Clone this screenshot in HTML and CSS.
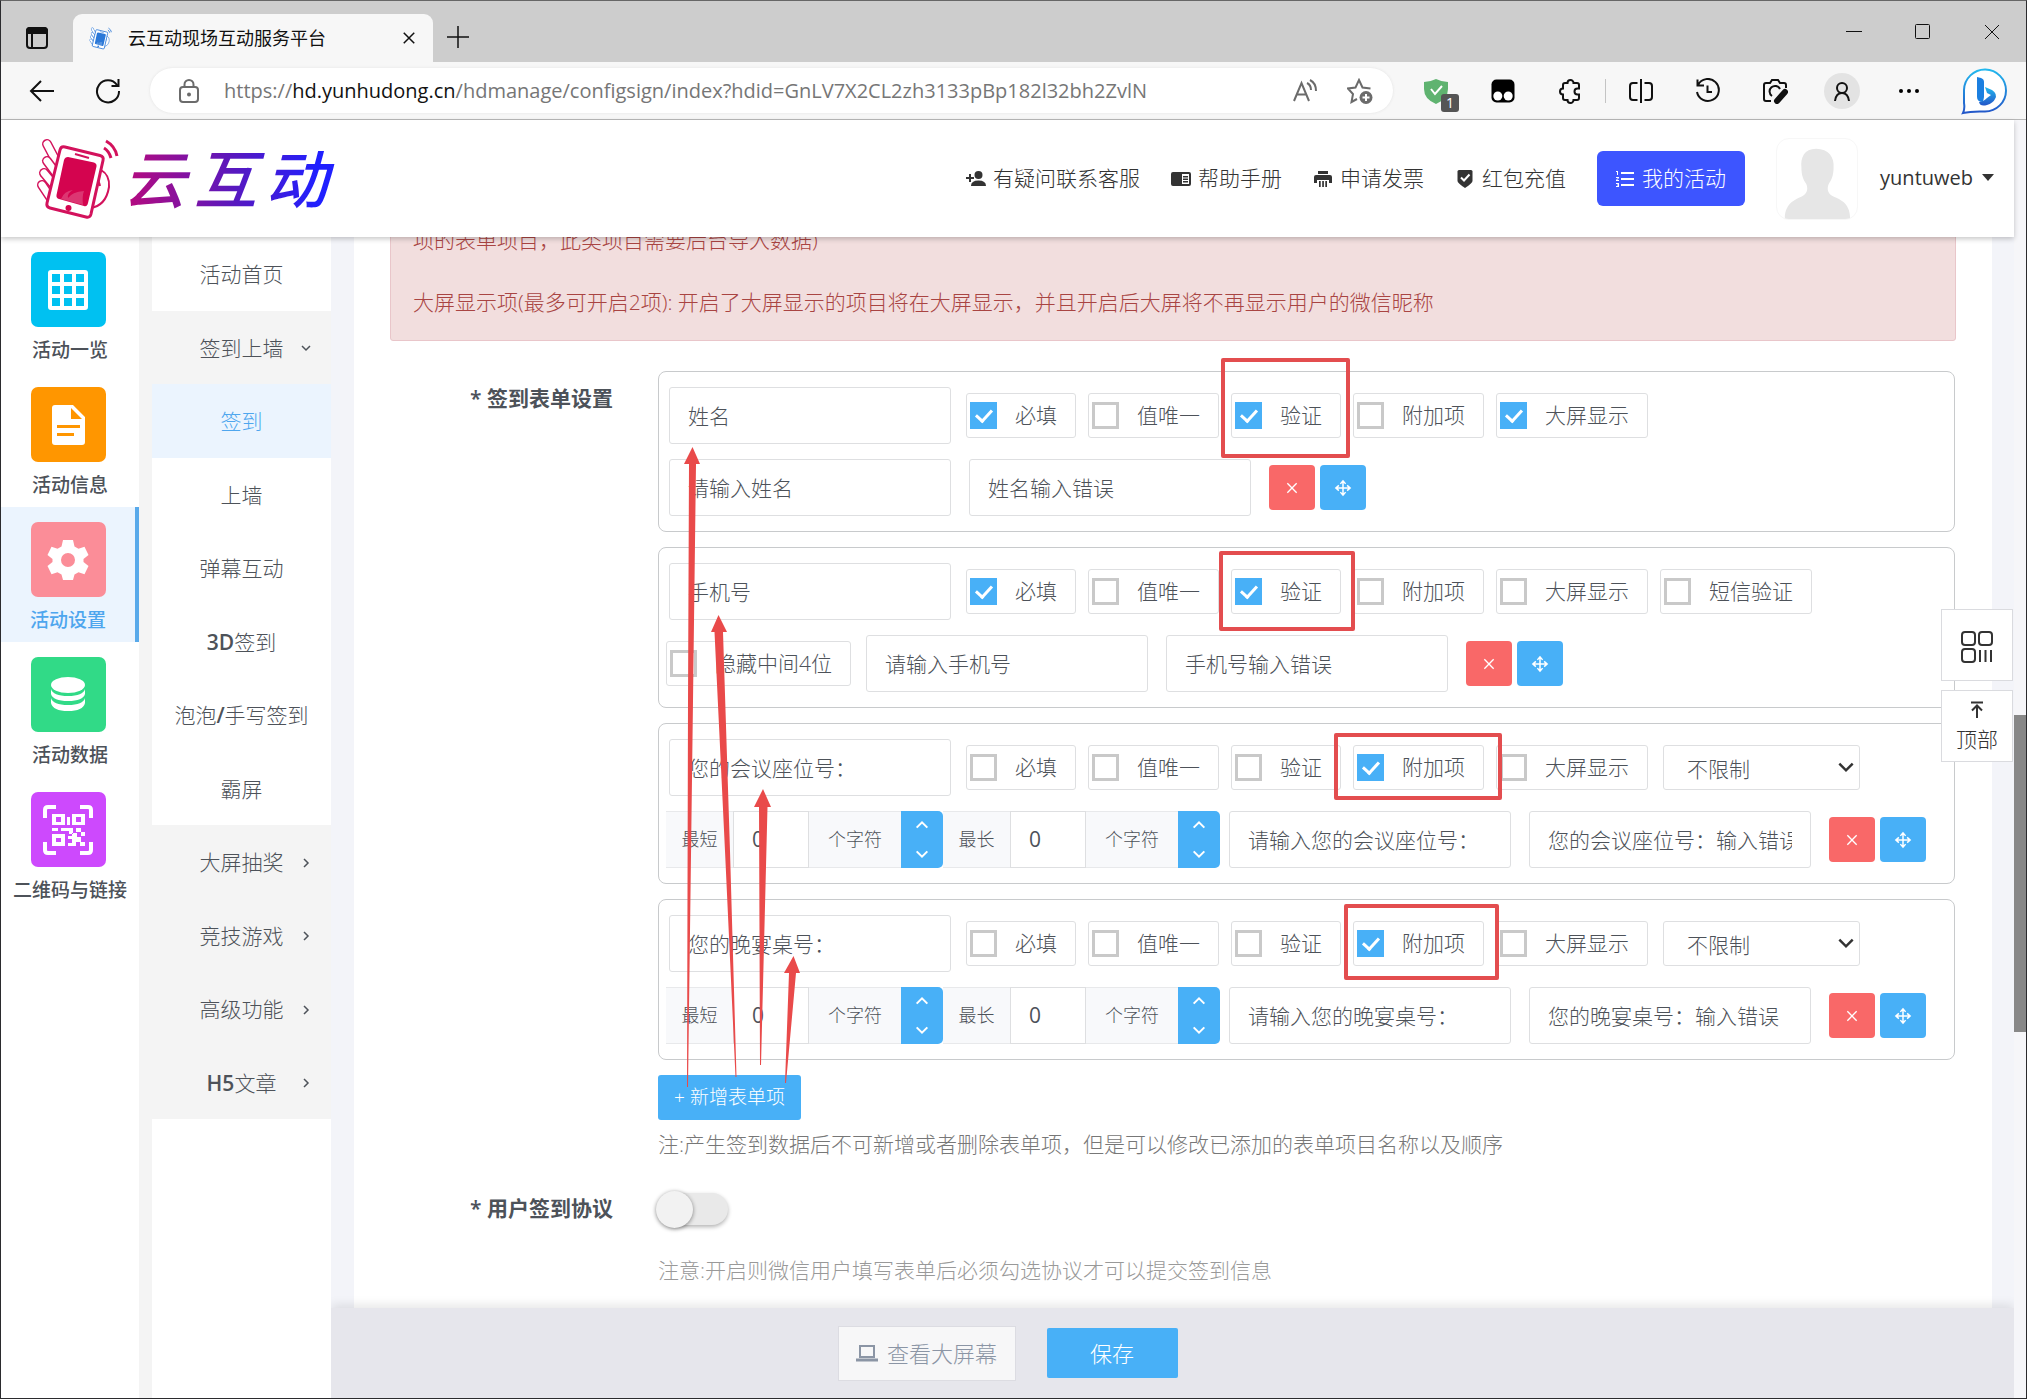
FILE: index.html
```html
<!DOCTYPE html>
<html lang="zh-CN">
<head>
<meta charset="utf-8">
<meta name="viewport" content="width=device-width, initial-scale=1">
<title>云互动现场互动服务平台</title>
<link rel="stylesheet" href="styles.css">
</head>
<body>
<svg class="sprite" aria-hidden="true">
  <symbol id="i-close" viewBox="0 0 24 24"><path d="M5 5 19 19M19 5 5 19"/></symbol>
  <symbol id="i-move" viewBox="0 0 24 24"><path d="M12 3v18M3 12h18M8.500 6.500 12 2.500l3.500 4M8.500 17.500l3.500 4 3.500-4M6.500 8.500l-4 3.500 4 3.500M17.500 8.500l4 3.500-4 3.500"/></symbol>
  <symbol id="i-up" viewBox="0 0 24 24"><path d="M4 16l8-8 8 8"/></symbol>
  <symbol id="i-down" viewBox="0 0 24 24"><path d="M4 8l8 8 8-8"/></symbol>
  <symbol id="i-right" viewBox="0 0 24 24"><path d="M8 4l8 8-8 8"/></symbol>
  <symbol id="i-hand" viewBox="0 0 84 84">
    <g stroke-linecap="round">
      <path d="M12 7 22 26" class="finger"/><path d="M12 7 22 26" class="finger-in"/>
      <path d="M12 24 21 36" class="finger"/><path d="M12 24 21 36" class="finger-in"/>
      <path d="M9 36 19 48" class="finger"/><path d="M9 36 19 48" class="finger-in"/>
      <path d="M7 48 15 60" class="finger"/><path d="M7 48 15 60" class="finger-in"/>
    </g>
    <path d="M66 33q9 5 8 17-3 19-19 21M62 43q2 1 3 6" class="thin"/>
    <path d="M30 10 65 18.500q4 1 3 5L56 77q-1 4-5 3L15 71q-4-1-3-5L25 13q1-4 5-3z" class="shell"/>
    <path d="M33 20 59 25.500q3 1 2.500 4L53 66q-1 4-4 3L24 62q-3-1-2.500-4L29 23q1-3 4-3z" class="screen"/>
    <path d="M26 62q3-8 12-9-6 3-5 8 4-6 16-7-2 5-1 14z" fill="#fff" fill-opacity=".2" stroke="none"/>
    <path d="M40 17l14 4" class="detail"/>
    <circle cx="33.500" cy="71" r="3" class="screen"/>
    <path d="M69 11q5 3 7 10M71 4q9 5 11 15" class="waves"/>
  </symbol>
</svg>

<div class="tabstrip">
  <button class="tab-menu" aria-label="标签页操作"><svg class="ic" width="24" height="24" viewBox="0 0 24 24"><rect x="2" y="2" width="20" height="20" rx="3"/><path d="M2 7V5q0-3 3-3h14q3 0 3 3v2z" fill="currentColor"/><path d="M7 7v15"/></svg></button>
  <div class="tab">
    <svg class="favicon" width="23" height="23"><use href="#i-hand"/></svg>
    <span class="tab-title">云互动现场互动服务平台</span>
    <button class="tab-close" aria-label="关闭标签页"><svg class="ic" width="18" height="18"><use href="#i-close"/></svg></button>
  </div>
  <button class="tab-new" aria-label="新建标签页"><svg class="ic" width="24" height="24" viewBox="0 0 24 24"><path d="M12 1v22M1 12h22"/></svg></button>
  <div class="win-controls">
    <button aria-label="最小化"><svg class="ic hair" width="16" height="16" viewBox="0 0 16 16"><path d="M0 7.500h16"/></svg></button>
    <button aria-label="最大化"><svg class="ic hair" width="16" height="16" viewBox="0 0 16 16"><rect x="0.500" y="0.500" width="14" height="14" rx="1"/></svg></button>
    <button aria-label="关闭"><svg class="ic hair" width="16" height="16" viewBox="0 0 16 16"><path d="M1 1l14 14M15 1 1 15"/></svg></button>
  </div>
</div>

<div class="toolbar">
  <button class="slot" aria-label="后退"><svg class="ic" width="26" height="24" viewBox="0 0 26 24"><path d="M25 12H2M12 2 2 12l10 10"/></svg></button>
  <button class="slot" aria-label="刷新"><svg class="ic" width="26" height="26" viewBox="0 0 26 26"><path d="M22 7A11 11 0 1 0 24 13M23.500 1v7h-7"/></svg></button>
  <div class="address">
    <svg class="ic muted" width="20" height="24" viewBox="0 0 20 24"><rect x="1" y="8" width="18" height="15" rx="3"/><path d="M5.500 8V5.500a4.500 4.500 0 0 1 9 0V8"/><circle cx="10" cy="15.500" r="1" fill="currentColor"/></svg>
    <span class="url">https://<b>hd.yunhudong.cn</b>/hdmanage/configsign/index?hdid=GnLV7X2CL2zh3133pBp182l32bh2ZvlN</span>
    <svg class="ic muted" width="26" height="24" viewBox="0 0 26 24"><path d="M2 22 9.500 4 17 22M5 15.500h9M15 4q4 2 4 7M18 1q6 3 6 11"/></svg>
    <svg class="ic muted star" width="26" height="26" viewBox="0 0 26 26"><path d="M10 21 4.500 24 6 16 1 10.500l7.500-1L12 2l3.500 7.500 8 1"/><circle cx="19" cy="19.500" r="6.500" fill="currentColor" stroke="none"/><path d="M19 16v7M15.500 19.500h7" stroke="#fff"/></svg>
  </div>
  <button class="slot shield" aria-label="扩展"><svg width="24" height="28" viewBox="0 0 24 28"><path d="M0 5q6 0 12-3 6 3 12 3v7q0 10-12 15Q0 22 0 12z" fill="#5fb370"/><path d="M7 12l4 5 7-8" fill="none" stroke="#fff" stroke-width="2"/></svg><span class="badge">1</span></button>
  <button class="slot" aria-label="脚本"><svg width="24" height="24" viewBox="0 0 24 24"><rect x="0.500" y="0.500" width="23" height="23" rx="5"/><circle cx="6.800" cy="17" r="4.500" fill="#fff"/><circle cx="17.200" cy="17" r="4.500" fill="#fff"/></svg></button>
  <button class="slot" aria-label="扩展列表"><svg class="ic thick" width="24" height="26" viewBox="0 0 24 26"><path d="M9.500 5a3 3 0 0 1 6 0H19q2 0 2 2v3.500h-1.500a3 3 0 0 0 0 6H21V20q0 2-2 2h-3.500a3 3 0 0 1-6 0H7q-2 0-2-2v-3.500a3 3 0 0 1 0-6V7q0-2 2-2z"/></svg></button>
  <span class="sep"></span>
  <button class="slot" aria-label="拆分屏幕"><svg class="ic thick" width="26" height="26" viewBox="0 0 26 26"><path d="M9.500 5H5Q2 5 2 8v11q0 3 3 3h4.500M16.500 5H21q3 0 3 3v11q0 3-3 3h-4.500M13 1v24"/></svg></button>
  <button class="slot" aria-label="历史记录"><svg class="ic thick" width="26" height="26" viewBox="0 0 26 26"><path d="M3 7a11 11 0 1 1-1 7M2.500 1.500v6H9M12.500 7.500V14H17"/></svg></button>
  <button class="slot" aria-label="网页捕获"><svg class="ic thick" width="26" height="26" viewBox="0 0 26 26"><path d="M9 23H4q-2 0-2-2V7q0-2 2-2h4l2-3h6l2 3h4q2 0 2 2v3M10 18a5.500 5.500 0 1 1 8-7"/><path d="M23 14 15 23" stroke-width="6" stroke-linecap="round"/></svg></button>
  <button class="slot" aria-label="个人资料"><span class="profile"><svg class="ic" width="20" height="22" viewBox="0 0 20 22"><circle cx="10" cy="8" r="5"/><path d="M3 21q1-8 7-8t7 8"/></svg></span></button>
  <button class="slot" aria-label="更多"><svg width="22" height="6" viewBox="0 0 22 6"><circle cx="3" cy="3" r="2"/><circle cx="11" cy="3" r="2"/><circle cx="19" cy="3" r="2"/></svg></button>
  <button class="slot slot-bing" aria-label="必应"><svg width="46" height="48" viewBox="0 0 46 48"><defs><linearGradient id="bg1" x1="0" y1="0" x2="0" y2="1"><stop offset="0" stop-color="#22b8ee"/><stop offset="1" stop-color="#2356c8"/></linearGradient></defs><path d="M2 46q2-4 1-10V23a21 21 0 1 1 21 21.500Q10 44 2 46z" fill="#fff" stroke="url(#bg1)" stroke-width="2"/><path d="M16 10l4 1q3 1 3 4v15l-1 5q-6 0-6-5z" fill="#1b7fe0"/><path d="M18 35q4 0 8-4l4-3-4-2-2-6 7 3q6 4 3 9-2 4-8 6-7 2-8-3z" fill="url(#bg1)"/></svg></button>
</div>

<div class="viewport">
<div class="site">
  <header class="site-header">
    <a class="logo" href="#"><svg width="84" height="84"><use href="#i-hand"/></svg><span class="logo-text"><i>云</i><i>互</i><i>动</i></span></a>
    <nav class="top-nav">
      <a href="#"><svg width="20" height="20" viewBox="0 0 20 20" fill="currentColor"><circle cx="12.500" cy="6" r="4"/><path d="M5 17q0-5.500 7.500-5.500T20 17zM3 5h2v3h3v2H5v3H3v-3H0V8h3z"/></svg>有疑问联系客服</a>
      <a href="#"><svg width="20" height="20" viewBox="0 0 20 20" fill="currentColor"><path fill-rule="evenodd" d="M2 3h16q2 0 2 2v10q0 2-2 2H2q-2 0-2-2V5q0-2 2-2zm9 2v10h7V5z"/><path d="M12 7h5v1.500h-5zM12 9.500h5V11h-5zM12 12h5v1.500h-5z"/></svg>帮助手册</a>
      <a href="#"><svg width="20" height="20" viewBox="0 0 20 20" fill="currentColor"><path d="M5 2h10v3H5zM3 6h14q2 0 2 2v6h-3v-3H4v3H1V8q0-2 2-2zM6 12h1.700v6H6zM9.200 12h1.700v6H9.200zM12.300 12H14v6h-1.700z"/></svg>申请发票</a>
      <a href="#"><svg width="20" height="20" viewBox="0 0 20 20"><path d="M4 1h12q1.500 0 1.500 1.500V12q0 2-7.500 7-7.500-5-7.500-7V2.500Q2.500 1 4 1z" fill="currentColor"/><path d="M6 8.500l3 3 5.500-6" fill="none" stroke="#fff" stroke-width="2"/></svg>红包充值</a>
      <a class="nav-primary" href="#"><svg width="20" height="20" viewBox="0 0 20 20" fill="currentColor"><path d="M6 3h13v2H6zM6 9h13v2H6zM6 15h13v2H6zM1 2h2v4H2V3H1zM1 8h3v1l-2 2h2v1H1v-1l2-2H1zM1 14h3v4H1v-1h2v-.5H2v-1h1V15H1z"/></svg>我的活动</a>
    </nav>
    <svg class="avatar" width="82" height="82" viewBox="0 0 82 82"><path d="M40 10c-12 0-16 9-15 19 0 8 2 13 5 17 2 5 1 9-3 12-6 4-19 6-19 24h67c0-18-12-20-19-24-4-3-5-7-3-12 3-4 5-9 5-17 1-10-5-19-18-19z" fill="#e6e6e6"/></svg>
    <button class="user">yuntuweb<span class="caret"></span></button>
  </header>

  <div class="body">
    <nav class="rail">
      <a href="#"><span class="tile cyan"><svg width="42" height="42" viewBox="0 0 42 42"><path fill="#fff" fill-rule="evenodd" d="M4 1h34q3 0 3 3v34q0 3-3 3H4q-3 0-3-3V4q0-3 3-3zm1 4v8h8V5zm12 0v8h8V5zm12 0v8h8V5zM5 17v8h8v-8zm12 0v8h8v-8zm12 0v8h8v-8zM5 29v8h8v-8zm12 0v8h8v-8zm12 0v8h8v-8z"/></svg></span>活动一览</a>
      <a href="#"><span class="tile orange"><svg width="42" height="42" viewBox="0 0 42 42"><path fill="#fff" fill-rule="evenodd" d="M8 1h18l12 12v25q0 3-3 3H8q-3 0-3-3V4q0-3 3-3zm16 3v11h11zM10 21v3h23v-3zm0 8v3h17v-3z"/></svg></span>活动信息</a>
      <a class="on" href="#"><span class="tile pink"><svg width="42" height="42" viewBox="0 0 42 42"><path fill="#fff" fill-rule="evenodd" d="M16 1h10l1.500 6.500 4 2.300 6-2 4 8.200-5 4v3l5 4-4 8.200-6-2-4 2.300L26 41H16l-1.500-5.500-4-2.300-6 2L.5 27l5-4v-3l-5-4 4-8.200 6 2 4-2.300zM21 14a7 7 0 1 0 0 14 7 7 0 0 0 0-14z"/></svg></span>活动设置</a>
      <a href="#"><span class="tile green"><svg width="42" height="42" viewBox="0 0 42 42" fill="#fff"><ellipse cx="21" cy="11" rx="17" ry="8"/><path d="M4 15q2 7 17 7t17-7v5q-2 7-17 7T4 20zM4 24q2 7 17 7t17-7v5q-2 8-17 8T4 29z"/></svg></span>活动数据</a>
      <a href="#"><span class="tile violet"><svg width="50" height="50" viewBox="0 0 50 50"><path d="M2 13V5q0-3 3-3h8M37 2h8q3 0 3 3v8M48 37v8q0 3-3 3h-8M13 48H5q-3 0-3-3v-8" fill="none" stroke="#fff" stroke-width="4"/><path fill="#fff" fill-rule="evenodd" d="M9 9h13v11H9zm4 3v5h5v-5zM29 9h13v11H29zm4 3v5h5v-5zM9 29h13v12H9zm4 4v4h5v-4zM24 12h3v8h-3zM9 23h6v3H9zM18 23h12v6h-4v-3h-8zM33 23h5v4h4v4h-4v-4h-5zM25 31h4v-3h5v4h4v5h4v4h-5v-4h-4v4h-8v-3h4v-4h-4z"/></svg></span>二维码与链接</a>
    </nav>
    <nav class="submenu">
      <ul>
        <li><a href="#">活动首页</a></li>
        <li class="group"><a href="#">签到上墙<svg class="ic" width="12" height="12"><use href="#i-down"/></svg></a></li>
        <li class="current"><a href="#">签到</a></li>
        <li><a href="#">上墙</a></li>
        <li><a href="#">弹幕互动</a></li>
        <li><a href="#"><b>3D</b>签到</a></li>
        <li><a href="#">泡泡<b>/</b>手写签到</a></li>
        <li><a href="#">霸屏</a></li>
        <li class="group"><a href="#">大屏抽奖<svg class="ic" width="12" height="12"><use href="#i-right"/></svg></a></li>
        <li class="group"><a href="#">竞技游戏<svg class="ic" width="12" height="12"><use href="#i-right"/></svg></a></li>
        <li class="group"><a href="#">高级功能<svg class="ic" width="12" height="12"><use href="#i-right"/></svg></a></li>
        <li class="group"><a href="#"><b>H5</b>文章<svg class="ic" width="12" height="12"><use href="#i-right"/></svg></a></li>
      </ul>
    </nav>

    <div class="content">
      <main class="panel">
        <div class="alert">项的表单项目，此类项目需要后台导入数据)<br><br>大屏显示项(最多可开启2项): 开启了大屏显示的项目将在大屏显示，并且开启后大屏将不再显示用户的微信昵称</div>

        <div class="form-row">
          <div class="form-label">* 签到表单设置</div>
          <div class="form-body">
            <div class="cards">
              <section class="card">
                <div class="line">
                  <input class="field" aria-label="项目名称" value="姓名">
                  <label class="check"><input type="checkbox" checked>必填</label>
                  <label class="check"><input type="checkbox">值唯一</label>
                  <label class="check"><input type="checkbox" checked>验证</label>
                  <label class="check"><input type="checkbox">附加项</label>
                  <label class="check"><input type="checkbox" checked>大屏显示</label>
                </div>
                <div class="line">
                  <input class="field" aria-label="提示文字" value="请输入姓名">
                  <input class="field" aria-label="错误提示" value="姓名输入错误">
                  <div class="actions"><button class="del" aria-label="删除"><svg class="ic" width="16" height="16"><use href="#i-close"/></svg></button><button class="move" aria-label="移动"><svg class="ic" width="18" height="18"><use href="#i-move"/></svg></button></div>
                </div>
              </section>
              <section class="card">
                <div class="line">
                  <input class="field" aria-label="项目名称" value="手机号">
                  <label class="check"><input type="checkbox" checked>必填</label>
                  <label class="check"><input type="checkbox">值唯一</label>
                  <label class="check"><input type="checkbox" checked>验证</label>
                  <label class="check"><input type="checkbox">附加项</label>
                  <label class="check"><input type="checkbox">大屏显示</label>
                  <label class="check"><input type="checkbox">短信验证</label>
                </div>
                <div class="line">
                  <label class="check"><input type="checkbox">隐藏中间4位</label>
                  <input class="field" aria-label="提示文字" value="请输入手机号">
                  <input class="field" aria-label="错误提示" value="手机号输入错误">
                  <div class="actions"><button class="del" aria-label="删除"><svg class="ic" width="16" height="16"><use href="#i-close"/></svg></button><button class="move" aria-label="移动"><svg class="ic" width="18" height="18"><use href="#i-move"/></svg></button></div>
                </div>
              </section>
              <section class="card">
                <div class="line">
                  <input class="field" aria-label="项目名称" value="您的会议座位号：">
                  <label class="check"><input type="checkbox">必填</label>
                  <label class="check"><input type="checkbox">值唯一</label>
                  <label class="check"><input type="checkbox">验证</label>
                  <label class="check"><input type="checkbox" checked>附加项</label>
                  <label class="check"><input type="checkbox">大屏显示</label>
                  <span class="select"><select aria-label="输入限制"><option>不限制</option></select><svg class="ic" width="20" height="20"><use href="#i-down"/></svg></span>
                </div>
                <div class="line">
                  <div class="length">
                    <label for="min1">最短</label><input id="min1" value="0"><span class="unit">个字符</span><span class="spin"><button aria-label="增加"><svg class="ic" width="16" height="16"><use href="#i-up"/></svg></button><button aria-label="减少"><svg class="ic" width="16" height="16"><use href="#i-down"/></svg></button></span>
                    <label for="max1">最长</label><input id="max1" value="0"><span class="unit">个字符</span><span class="spin"><button aria-label="增加"><svg class="ic" width="16" height="16"><use href="#i-up"/></svg></button><button aria-label="减少"><svg class="ic" width="16" height="16"><use href="#i-down"/></svg></button></span>
                  </div>
                  <input class="field" aria-label="提示文字" value="请输入您的会议座位号：">
                  <input class="field" aria-label="错误提示" value="您的会议座位号：输入错误">
                  <div class="actions"><button class="del" aria-label="删除"><svg class="ic" width="16" height="16"><use href="#i-close"/></svg></button><button class="move" aria-label="移动"><svg class="ic" width="18" height="18"><use href="#i-move"/></svg></button></div>
                </div>
              </section>
              <section class="card">
                <div class="line">
                  <input class="field" aria-label="项目名称" value="您的晚宴桌号：">
                  <label class="check"><input type="checkbox">必填</label>
                  <label class="check"><input type="checkbox">值唯一</label>
                  <label class="check"><input type="checkbox">验证</label>
                  <label class="check"><input type="checkbox" checked>附加项</label>
                  <label class="check"><input type="checkbox">大屏显示</label>
                  <span class="select"><select aria-label="输入限制"><option>不限制</option></select><svg class="ic" width="20" height="20"><use href="#i-down"/></svg></span>
                </div>
                <div class="line">
                  <div class="length">
                    <label for="min2">最短</label><input id="min2" value="0"><span class="unit">个字符</span><span class="spin"><button aria-label="增加"><svg class="ic" width="16" height="16"><use href="#i-up"/></svg></button><button aria-label="减少"><svg class="ic" width="16" height="16"><use href="#i-down"/></svg></button></span>
                    <label for="max2">最长</label><input id="max2" value="0"><span class="unit">个字符</span><span class="spin"><button aria-label="增加"><svg class="ic" width="16" height="16"><use href="#i-up"/></svg></button><button aria-label="减少"><svg class="ic" width="16" height="16"><use href="#i-down"/></svg></button></span>
                  </div>
                  <input class="field" aria-label="提示文字" value="请输入您的晚宴桌号：">
                  <input class="field" aria-label="错误提示" value="您的晚宴桌号：输入错误">
                  <div class="actions"><button class="del" aria-label="删除"><svg class="ic" width="16" height="16"><use href="#i-close"/></svg></button><button class="move" aria-label="移动"><svg class="ic" width="18" height="18"><use href="#i-move"/></svg></button></div>
                </div>
              </section>
              <!-- Hand-drawn markup laid over the form: frames and arrows -->
              <svg class="marks" width="900" height="720" viewBox="0 0 900 720" aria-hidden="true">
                <g fill="none" stroke="#e34d4f" stroke-width="4" stroke-linejoin="round">
                  <rect x="565" y="-11" width="125" height="96"/>
                  <rect x="563" y="182" width="132" height="76"/>
                  <rect x="678" y="364" width="164" height="63"/>
                  <rect x="688" y="535" width="151" height="72"/>
                </g>
                <g fill="#e94a4a">
                  <path d="M34.500 76 42 93H38L35 330 30 716H29L30 330 31 93H26z"/>
                  <path d="M60.500 244 69 261H65L72 480 78.500 706H77.500L67 480 56.500 261H53z"/>
                  <path d="M105 418 113 436H109.500L103 694H102L101 436H96z"/>
                  <path d="M135.500 585 142 602H138L128 712H127L131 602H126z"/>
                </g>
              </svg>
            </div>
            <button class="add">+ 新增表单项</button>
            <p class="note">注:产生签到数据后不可新增或者删除表单项，但是可以修改已添加的表单项目名称以及顺序</p>
          </div>
        </div>

        <div class="form-row agree">
          <label class="form-label" for="agree">* 用户签到协议</label>
          <div class="form-body">
            <input id="agree" class="switch" type="checkbox">
            <p class="note pale">注意:开启则微信用户填写表单后必须勾选协议才可以提交签到信息</p>
          </div>
        </div>
      </main>
      <footer class="footer">
        <button class="view"><svg class="ic thick" width="22" height="20" viewBox="0 0 22 20"><rect x="4" y="3" width="14" height="11"/><path d="M0 17h22" stroke-width="3"/></svg>查看大屏幕</button>
        <button class="save">保存</button>
      </footer>
    </div>
  </div>

  <div class="floats">
    <button aria-label="小程序码"><svg class="ic thick" width="32" height="32" viewBox="0 0 32 32"><rect x="1" y="1" width="13" height="13" rx="3"/><rect x="18" y="1" width="13" height="13" rx="3"/><rect x="1" y="18" width="13" height="13" rx="3"/><path d="M19 19v12M24.500 19v12M30 19v12"/></svg></button>
    <button><svg class="ic" width="16" height="18" viewBox="0 0 16 18"><path d="M2 1.500h12M8 17V5M3 9.500 8 4.500l5 5"/></svg>顶部</button>
  </div>
</div>
<div class="scrollbar"><span></span></div>
</div>
</body>
</html>
```
FILE: styles.css
```css
* { box-sizing: border-box; }

body {
  margin: 0;
  height: 100vh;
  display: flex;
  flex-direction: column;
  overflow: hidden;
  border: 1px solid #2b2b2e;
  border-top-color: #666;
  background: #fff;
  color: #4d5259;
  font: 300 21px/31px "Open Sans", "Noto Sans CJK SC", sans-serif;
}

button, input, select { font: inherit; color: inherit; }
button { border: 0; padding: 0; background: none; display: flex; align-items: center; justify-content: center; }
a { color: inherit; text-decoration: none; }
svg { flex: none; display: block; }
.sprite { position: absolute; width: 0; height: 0; }
.ic { fill: none; stroke: currentColor; stroke-width: 2; }
.ic.hair { stroke-width: 1; }
.muted { color: #6b6b6b; }

/* Browser frame */
.tabstrip { display: flex; height: 61px; background: #cdcdcd; color: #111; }
.tab-menu { width: 72px; padding-top: 12px; }
.tab {
  display: flex;
  align-items: center;
  width: 360px;
  margin-top: 13px;
  padding: 0 15px 0 16px;
  border-radius: 9px 9px 0 0;
  background: #f7f7f7;
}
.favicon { fill: none; stroke: #2b78d8; color: #2b78d8; }
.tab-title { flex: 1; margin-left: 16px; font-size: 18px; font-weight: 400; }
.tab-new { width: 50px; padding-top: 10px; }
.tab-new .ic { stroke-width: 1.500; }
.win-controls { display: flex; margin-left: auto; }
.win-controls button { width: 69px; }

.toolbar {
  display: flex;
  align-items: center;
  height: 58px;
  padding-left: 8px;
  background: #f7f7f7;
  border-bottom: 1px solid #b9b9b9;
  color: #111;
}
.slot { width: 66px; height: 56px; position: relative; }
.address ~ .slot { width: 67px; }
.toolbar .slot-bing { width: 84px; }
.address {
  flex: 1;
  display: flex;
  align-items: center;
  height: 45px;
  margin: 0 9px;
  padding: 0 20px 0 29px;
  border-radius: 23px;
  background: #fff;
  box-shadow: 0 0 3px #e2e2e2;
}
.url { flex: 1; margin-left: 25px; font: 400 20px/28px "Open Sans", sans-serif; color: #767676; white-space: nowrap; }
.url b { font-weight: 400; color: #111; }
.star { margin-left: 29px; }
.badge {
  position: absolute;
  right: 10px;
  bottom: 7px;
  width: 18px;
  border-radius: 3px;
  background: #555;
  color: #fff;
  font: 400 14px/18px "Open Sans", sans-serif;
}
.sep { width: 1px; height: 24px; margin: 0 1px 0 2px; background: #c4c4c4; }
.profile { display: flex; align-items: center; justify-content: center; width: 36px; height: 36px; border-radius: 50%; background: #e3e3e3; }

/* Site */
.viewport { flex: 1; display: flex; min-height: 0; }
.site { flex: 1; min-width: 0; display: flex; flex-direction: column; position: relative; }
.scrollbar { display: grid; grid-template-rows: 595fr 317fr 366fr; width: 12px; background: #f6f6f9; }
.scrollbar span { grid-row: 2; background: #888; }

.site-header {
  display: flex;
  align-items: center;
  height: 117px;
  padding: 0 20px 0 34px;
  background: #fff;
  box-shadow: 0 2px 5px rgba(0, 0, 0, .22);
  position: relative;
  z-index: 2;
  color: #333;
}
.logo { display: flex; align-items: center; margin-right: auto; fill: none; stroke: #d3125c; color: #d4044f; }
#i-hand .finger { stroke-width: 10; }
#i-hand .finger-in { stroke-width: 7; stroke: #fff; }
#i-hand .thin { stroke-width: 2; fill: #fff; }
#i-hand .shell { stroke-width: 3; fill: #fff; }
#i-hand .screen { fill: currentColor; stroke: none; }
#i-hand .detail { stroke-width: 2; }
#i-hand .waves { stroke-width: 3; }
.logo-text {
  display: flex;
  gap: 8px;
  margin-left: 4px;
  padding-right: 12px;
  font-size: 63px;
  line-height: 84px;
  font-weight: 500;
  background: linear-gradient(90deg, #b90a7c, #5a18bd 50%, #2020ff 90%);
  -webkit-background-clip: text;
  background-clip: text;
  color: transparent;
}
.top-nav { display: flex; align-items: center; gap: 31px; }
.top-nav a { display: flex; align-items: center; gap: 7px; white-space: nowrap; }
.top-nav .nav-primary { height: 55px; padding: 0 19px 0 18px; border-radius: 6px; background: #3d55ff; color: #fff; }
.avatar { margin: 0 22px 0 31px; border: 1px solid #f7f7f7; border-radius: 13px; }
.user { font-size: 20px; font-weight: 400; gap: 9px; padding-bottom: 2px; }
.caret { border: 6px solid transparent; border-top: 7px solid #333; border-bottom: 0; }

.body { flex: 1; display: flex; min-height: 0; }
.rail { width: 138px; background: #fff; font-size: 19px; font-weight: 500; }
.rail a { display: flex; flex-direction: column; align-items: center; height: 135px; padding-top: 15px; gap: 8px; white-space: nowrap; }
.rail .on { background: #ebf4fe; border-right: 4px solid #58a9ea; color: #4ea6ee; }
.tile { display: flex; align-items: center; justify-content: center; width: 75px; height: 75px; margin-right: 4px; border-radius: 7px; }
.on .tile { margin-right: 0; }
.cyan { background: #00c1f1; }
.orange { background: #ff9600; }
.pink { background: #fb8d98; }
.green { background: #31da87; }
.violet { background: #cd49fd; }

.submenu { display: flex; flex-direction: column; width: 192px; padding-left: 13px; background: #f4f4f4; }
.submenu::after { content: ""; flex: 1; background: #fff; }
.submenu ul { display: grid; grid-auto-rows: 1fr; height: 882px; margin: 0; padding: 0; list-style: none; flex: none; }
.submenu li { display: flex; background: #fff; }
.submenu li.group { background: #f4f4f4; }
.submenu li.current { background: #ebf4fe; color: #4ea6ee; }
.submenu a { flex: 1; display: flex; align-items: center; justify-content: center; padding-top: 2px; position: relative; }
.submenu b { font-weight: 600; }
.submenu .ic { position: absolute; right: 19px; stroke-width: 3; }

.content { flex: 1; min-width: 0; display: flex; flex-direction: column; background: #f3f4f9; overflow: hidden; }
.panel { flex: 1; min-height: 0; margin: 0 22px 0 23px; padding: 0 36px; background: #fff; }
.alert {
  margin: -13px 0 30px;
  padding: 0 22px 22px;
  border: 1px solid #e9c6ca;
  border-radius: 3px;
  background: #f2dede;
  color: #a94442;
}
.form-row { display: grid; grid-template-columns: 223px 1fr; gap: 45px; }
.form-row.agree { margin-top: 31px; }
.form-label { padding-top: 12px; text-align: right; font-weight: 600; font-size: 21px; color: #4d5259; }
.agree .form-label { padding-top: 2px; }

.cards { position: relative; display: flex; flex-direction: column; gap: 15px; margin-right: 1px; }
.card { display: flex; flex-direction: column; gap: 15px; padding: 15px 7px; border: 1px solid #c8cacc; border-radius: 8px; height: 161px; }
.line { display: flex; align-items: center; gap: 6px; height: 57px; }
.field { width: 282px; height: 57px; margin: 0 9px 0 3px; padding: 0 18px 2px; border: 1px solid #dedfe1; border-radius: 3px; background: #fff; }
.check { display: flex; align-items: center; height: 45px; margin-right: 6px; padding: 0 18px 0 3px; border: 1px solid #dedfe1; border-radius: 3px; white-space: nowrap; }
.check input {
  appearance: none;
  display: flex;
  align-items: center;
  justify-content: center;
  width: 27px;
  height: 27px;
  margin: 0 18px 0 0;
  border: 3px solid #c9c9c9;
  background: #fff;
}
.check input:checked { border-color: #48b0f7; background: #48b0f7; }
.check input:checked::before {
  content: "";
  width: 7px;
  height: 13px;
  margin-bottom: 4px;
  border: solid #fff;
  border-width: 0 3px 3px 0;
  transform: rotate(42deg);
}
.select { position: relative; margin-left: 3px; }
.select select { appearance: none; display: block; width: 197px; height: 45px; padding: 3px 23px 0; border: 1px solid #dedfe1; border-radius: 3px; background: #fff; }
.select .ic { position: absolute; right: 4px; top: 12px; stroke-width: 3; color: #333; }
.actions { display: flex; gap: 5px; margin-left: 3px; color: #fff; }
.actions button { width: 46px; height: 45px; border-radius: 4px; }
.del { background: #f96868; }
.move { background: #48b0f7; }

.length { display: flex; height: 57px; }
.length label, .unit { display: flex; align-items: center; justify-content: center; border: 1px solid #e8e9eb; border-width: 1px 0; background: #f8f9fb; font-size: 18px; }
.length label { width: 67px; }
.unit { width: 92px; }
.length input { width: 76px; padding: 0 18px; border: 1px solid #dedfe1; font-weight: 400; }
.spin { display: flex; flex-direction: column; width: 42px; border-radius: 0 5px 5px 0; background: #48b0f7; color: #fff; }
.spin button { flex: 1; }
.spin .ic { stroke-width: 3; }

.marks { position: absolute; left: 0; top: 0; overflow: visible; pointer-events: none; }
.add { width: 143px; height: 45px; margin-top: 15px; border-radius: 3px; background: #48b0f7; color: #fff; font-size: 19px; }
.note { margin: 9px 0 0; color: #777; }
.switch {
  appearance: none;
  display: block;
  width: 68px;
  height: 32px;
  margin: 2px 0 0 2px;
  border-radius: 16px;
  background: #e9e9e9;
  box-shadow: 0 2px 4px rgba(0, 0, 0, .3);
}
.switch::before { content: ""; display: block; width: 37px; height: 37px; margin: -2px 0 0 -4px; border-radius: 50%; background: #f2f2f2; box-shadow: 0 1px 4px rgba(0, 0, 0, .45); float: left; }
.note.pale { margin-top: 30px; color: #999; }

.footer {
  display: flex;
  align-items: center;
  justify-content: center;
  gap: 31px;
  height: 90px;
  padding-right: 330px;
  background: #e6e6ec;
  box-shadow: 0 -3px 10px rgba(0, 0, 0, .1);
  position: relative;
  font-size: 22px;
}
.view { width: 178px; height: 55px; gap: 9px; border: 1px solid #dcdce2; background: #f7f7f8; color: #8b95a5; }
.save { width: 131px; height: 50px; border-radius: 2px; background: #48b0f7; color: #fff; }

.floats { position: absolute; right: 1px; top: 489px; z-index: 1; display: flex; flex-direction: column; gap: 9px; }
.floats button { flex-direction: column; gap: 5px; width: 72px; height: 72px; padding-top: 4px; border: 1px solid #dadbdf; background: #fff; color: #333; }
```
